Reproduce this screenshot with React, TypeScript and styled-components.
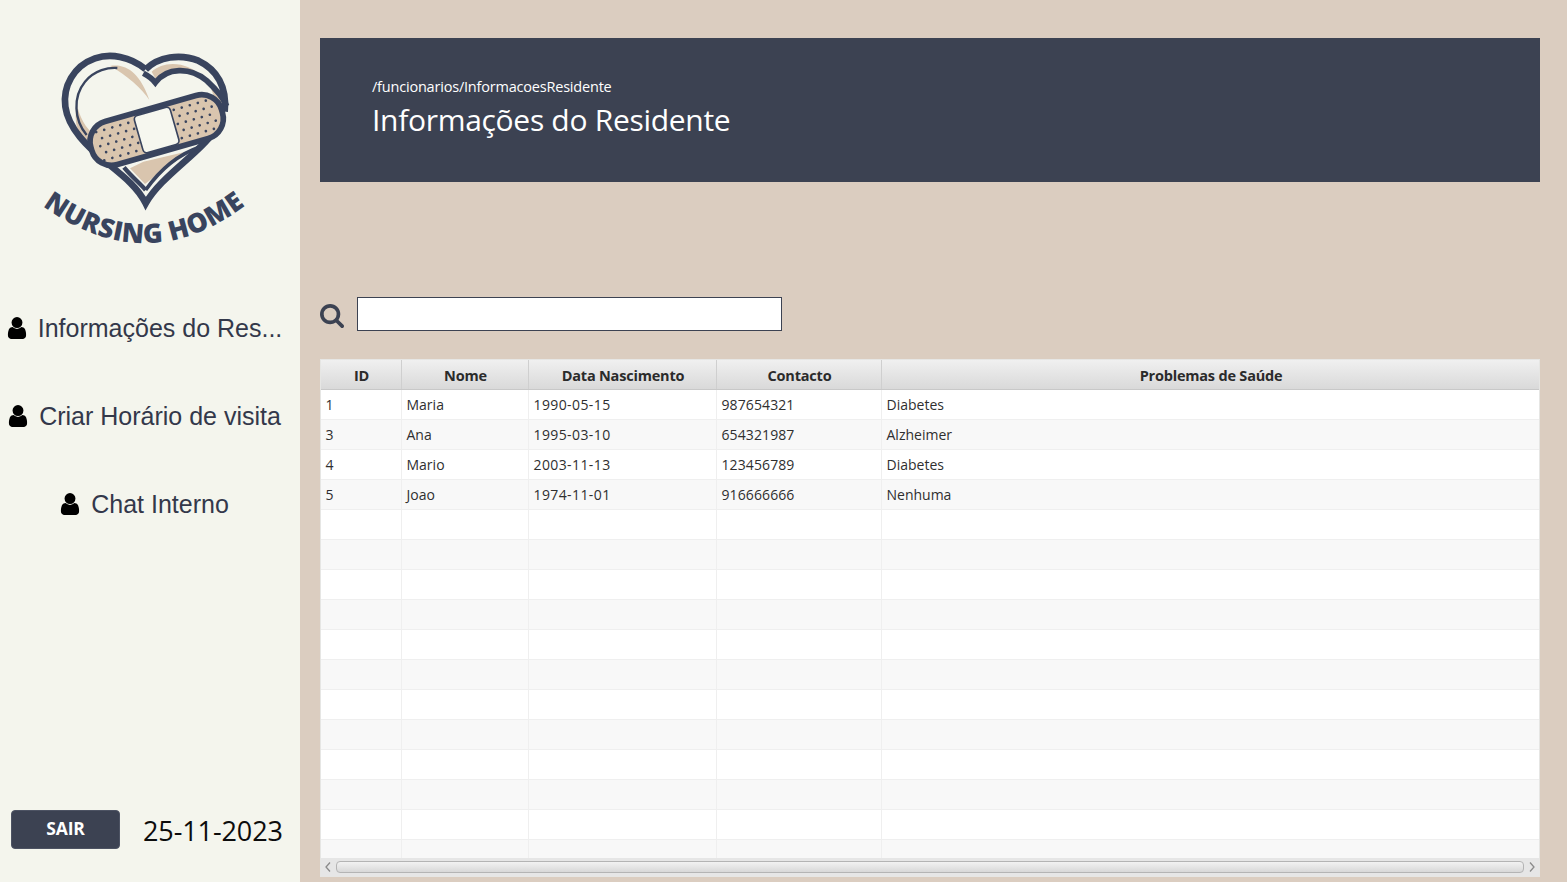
import React from "react";
import styled, { createGlobalStyle } from "styled-components";

const GlobalStyle = createGlobalStyle`
  html, body { margin: 0; padding: 0; height: 100%; overflow: hidden; }
  #root { height: 100%; }
  * { box-sizing: border-box; }
`;

const UI_FONT = `"Open Sans", "Noto Sans", sans-serif`;
const NAVY = "#3c4252";
const LOGO_NAVY = "#39445e";
const TAN = "#d9c5ae";
const COLUMNS = "81px 127px 188px 165px 1fr";

const Page = styled.div`
  display: flex;
  width: 1567px;
  height: 882px;
  background: #dbcdc0;
  font-family: ${UI_FONT};
`;
const Sidebar = styled.aside`
  width: 300px;
  flex: none;
  display: flex;
  flex-direction: column;
  background: #f4f5ed;
`;
const LogoWrap = styled.div`
  padding: 40px 0 24px 30px;
  height: 284px;
`;
const Nav = styled.nav`
  display: flex;
  flex-direction: column;
  padding-right: 11px;
`;
const NavItem = styled.div`
  height: 88px;
  display: flex;
  align-items: center;
  justify-content: center;
  gap: 11px;
  font: 25px "Liberation Sans", Arial, sans-serif;
  color: #33384a;
  white-space: nowrap;
`;
const SideFooter = styled.div`
  margin-top: auto;
  display: flex;
  align-items: flex-end;
  gap: 23px;
  padding: 0 0 32px 11px;
`;
const ExitButton = styled.button`
  width: 109px;
  height: 39px;
  margin-bottom: 1px;
  border: 1px solid #4d5363;
  border-radius: 4px;
  background: ${NAVY};
  color: #fff;
  font: 700 17.5px ${UI_FONT};
  letter-spacing: -0.2px;
  padding: 0 0 3px;
`;
const DateText = styled.span`
  font-size: 27px;
  color: #0c0c0c;
  letter-spacing: -0.1px;
  line-height: 39px;
`;
const Main = styled.main`
  flex: 1;
  min-width: 0;
  display: flex;
  flex-direction: column;
  padding: 38px 27px 5px 20px;
`;
const Banner = styled.header`
  height: 144px;
  flex: none;
  background: ${NAVY};
  color: #fff;
  padding: 39px 52px 0;
`;
const BannerPath = styled.div`
  font-size: 14.5px;
  line-height: 20px;
  letter-spacing: -0.2px;
`;
const BannerTitle = styled.h1`
  margin: 0;
  font-size: 30px;
  font-weight: 400;
  line-height: 46px;
  letter-spacing: -0.3px;
`;
const SearchRow = styled.div`
  margin-top: 115px;
  height: 34px;
  flex: none;
  display: flex;
  align-items: center;
  gap: 13px;
`;
const SearchInput = styled.input`
  width: 425px;
  height: 34px;
  border: 1px solid ${NAVY};
  background: #fff;
  padding: 0 6px;
  outline: none;
`;
const Table = styled.section`
  margin-top: 28px;
  flex: 1;
  min-height: 0;
  display: flex;
  flex-direction: column;
  padding: 1px;
  background: #e6e6e4;
`;
const HeaderRow = styled.div`
  display: grid;
  grid-template-columns: ${COLUMNS};
  height: 30px;
  flex: none;
  background: linear-gradient(#f0f0f0, #d9d9d9);
  border-bottom: 1px solid #c8c8c8;
`;
const HeaderCell = styled.div`
  display: flex;
  align-items: center;
  justify-content: center;
  padding: 2px 0 0 1px;
  font-size: 14.5px;
  font-weight: 700;
  letter-spacing: -0.2px;
  color: #2b2b2b;
  border-right: 1px solid #cfcfcf;
  &:last-child { border-right: none; }
`;
const Body = styled.div`
  flex: 1;
  min-height: 0;
  overflow: hidden;
  background: #fff;
`;
const Row = styled.div<{ $odd: boolean }>`
  display: grid;
  grid-template-columns: ${COLUMNS};
  height: 30px;
  background: ${(p) => (p.$odd ? "#f8f8f8" : "#ffffff")};
  border-bottom: 1px solid #efefef;
`;
const Cell = styled.div<{ $spacing: number }>`
  display: flex;
  align-items: center;
  padding-left: 4.5px;
  font-size: 14px;
  letter-spacing: ${(p) => p.$spacing}px;
  color: #2f2f2f;
  border-right: 1px solid #efefef;
  white-space: nowrap;
  &:last-child { border-right: none; }
`;
const ScrollBar = styled.div`
  height: 18px;
  flex: none;
  display: flex;
  align-items: center;
  background: #e6e6e6;
  color: #8a8a8a;
`;
const ScrollArrow = styled.svg`
  width: 15px;
  height: 12px;
  flex: none;
`;
const ScrollThumb = styled.div`
  flex: 1;
  height: 12px;
  border: 1px solid #b4b4b4;
  border-radius: 4px;
  background: linear-gradient(#f2f2f2, #d8d8d8);
`;

const UserIcon = () => (
  <svg width="20" height="22" viewBox="0 0 1408 1536" style={{ flex: "none" }}>
    <path
      fill="#000"
      d="M1408 1271q0 109-62.5 187t-150.5 78H341q-88 0-150.5-78T128 1271q0-85 8.5-160.5t31.5-152 58.5-131 94-89T455 704q131 128 313 128t313-128q76 0 134.5 34.5t94 89 58.5 131 31.5 152 8.5 160.5zm-256-887q0 159-112.5 271.5T768 768 496.5 655.5 384 384t112.5-271.5T768 0t271.5 112.5T1152 384z"
      transform="translate(-64 0)"
    />
  </svg>
);

const SearchIcon = () => (
  <svg width="24" height="24" viewBox="0 0 1664 1664" style={{ flex: "none", marginTop: 3 }}>
    <path
      fill={NAVY}
      d="M1152 704q0-185-131.500-316.500T704 256 387.500 387.500 256 704t131.500 316.500T704 1152t316.500-131.500T1152 704zm512 832q0 52-38 90t-90 38q-54 0-90-38l-343-342q-179 124-399 124-143 0-273.500-55.500t-225-150-150-225T0 704t55.500-273.500 150-225 225-150T704 0t273.500 55.500 225 150 150 225T1408 704q0 220-124 399l343 343q37 37 37 90z"
    />
  </svg>
);

const bandageDots: [number, number][] = [];
for (let r = 0; r < 5; r++) {
  for (let c = 0; c < 5; c++) {
    const x = c * 25 + (r % 2 ? 12 : 0);
    const y = -44 + r * 22;
    bandageDots.push([-176 + x, y]);
    bandageDots.push([66 + x, y]);
  }
}

const Logo = () => (
  <svg width="230" height="220" viewBox="0 0 690 660">
    <path d="M240 78 C290 70 330 100 358 180 C335 145 290 105 240 78 Z" fill={TAN} />
    <path d="M140 190 C130 250 145 295 172 322 L195 285 C165 265 148 230 140 190 Z" fill={TAN} />
    <path d="M365 95 C400 62 470 60 525 115 C480 88 420 88 380 122 Z" fill={TAN} />
    <path d="M535 125 C565 150 585 175 590 205 L560 190 Z" fill={TAN} />
    <path d="M300 385 L345 432 C390 395 440 360 490 330 L340 365 Z" fill={TAN} />
    <path
      d="M347 88 C300 48 240 40 195 55 C130 78 98 140 106 200 C115 265 170 320 235 372 C285 412 325 445 347 490 C375 440 430 395 480 350 C530 305 552 280 575 240"
      fill="none"
      stroke={LOGO_NAVY}
      strokeWidth="20"
      strokeLinejoin="miter"
    />
    <path
      d="M347 88 C385 50 450 40 505 62 C560 88 592 140 584 215"
      fill="none"
      stroke={LOGO_NAVY}
      strokeWidth="20"
    />
    <path
      d="M170 285 C132 240 128 170 165 125 C195 90 235 82 262 84"
      fill="none"
      stroke={LOGO_NAVY}
      strokeWidth="7"
    />
    <path
      d="M340 100 C355 108 368 118 376 128 C410 82 480 80 530 122 C555 145 578 170 590 198"
      fill="none"
      stroke={LOGO_NAVY}
      strokeWidth="17"
    />
    <path d="M282 382 C305 410 330 430 347 450" fill="none" stroke={LOGO_NAVY} strokeWidth="13" />
    <path d="M508 322 C440 345 390 390 347 450" fill="none" stroke={LOGO_NAVY} strokeWidth="11" />
    <g transform="translate(380 270) rotate(-16)">
      <rect x="-204" y="-67" width="408" height="134" rx="62" fill={TAN} stroke={LOGO_NAVY} strokeWidth="17" />
      <rect x="-56" y="-58" width="112" height="116" rx="12" fill="#f6f7ef" stroke={LOGO_NAVY} strokeWidth="5" />
      {bandageDots.map(([x, y]) => (
        <circle key={`${x}:${y}`} cx={x} cy={y} r="4" fill={LOGO_NAVY} />
      ))}
    </g>
    <defs>
      <path id="logo-arc" d="M38 497 Q345 722 645 497" />
    </defs>
    <text fontFamily='"Open Sans", sans-serif' fontWeight="800" fontSize="80" fill={LOGO_NAVY}>
      <textPath href="#logo-arc" textLength="660" lengthAdjust="spacing">
        NURSING HOME
      </textPath>
    </text>
  </svg>
);

const rows = [
  ["1", "Maria", "1990-05-15", "987654321", "Diabetes"],
  ["3", "Ana", "1995-03-10", "654321987", "Alzheimer"],
  ["4", "Mario", "2003-11-13", "123456789", "Diabetes"],
  ["5", "Joao", "1974-11-01", "916666666", "Nenhuma"],
];
const emptyRows = Array.from({ length: 12 }, () => ["", "", "", "", ""]);
const headers = ["ID", "Nome", "Data Nascimento", "Contacto", "Problemas de Saúde"];
const navItems = ["Informações do Res...", "Criar Horário de visita", "Chat Interno"];
const columnSpacing = [0, 0, 0.4, 0.1, 0];

export default function App() {
  return (
    <Page>
      <GlobalStyle />
      <Sidebar>
        <LogoWrap>
          <Logo />
        </LogoWrap>
        <Nav>
          {navItems.map((label) => (
            <NavItem key={label}>
              <UserIcon />
              {label}
            </NavItem>
          ))}
        </Nav>
        <SideFooter>
          <ExitButton>SAIR</ExitButton>
          <DateText>25-11-2023</DateText>
        </SideFooter>
      </Sidebar>
      <Main>
        <Banner>
          <BannerPath>/funcionarios/InformacoesResidente</BannerPath>
          <BannerTitle>Informações do Residente</BannerTitle>
        </Banner>
        <SearchRow>
          <SearchIcon />
          <SearchInput />
        </SearchRow>
        <Table>
          <HeaderRow>
            {headers.map((h) => (
              <HeaderCell key={h}>{h}</HeaderCell>
            ))}
          </HeaderRow>
          <Body>
            {[...rows, ...emptyRows].map((row, i) => (
              <Row key={i} $odd={i % 2 === 1}>
                {row.map((value, j) => (
                  <Cell key={j} $spacing={columnSpacing[j]}>
                    {value}
                  </Cell>
                ))}
              </Row>
            ))}
          </Body>
          <ScrollBar>
            <ScrollArrow viewBox="0 0 15 12">
              <path d="M9 1.500 L5 6 L9 10.500" fill="none" stroke="currentColor" strokeWidth="1.300" />
            </ScrollArrow>
            <ScrollThumb />
            <ScrollArrow viewBox="0 0 15 12">
              <path d="M6 1.500 L10 6 L6 10.500" fill="none" stroke="currentColor" strokeWidth="1.300" />
            </ScrollArrow>
          </ScrollBar>
        </Table>
      </Main>
    </Page>
  );
}
